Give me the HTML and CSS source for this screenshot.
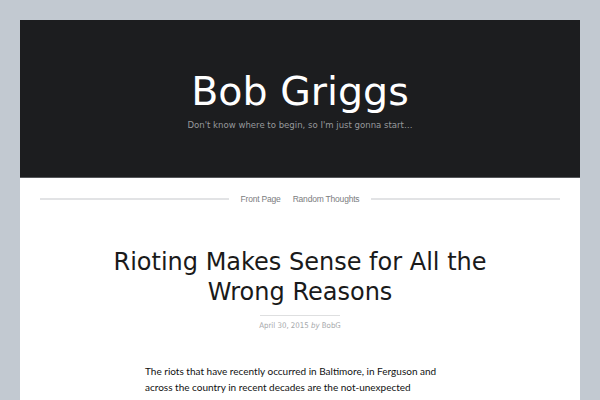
FILE: index.html
```html
<!DOCTYPE html>
<html>
<head>
<meta charset="utf-8">
<link rel="stylesheet" href="styles.css">
</head>
<body>
<div class="page">
  <header class="masthead">
    <h1 class="site-title">Bob Griggs</h1>
    <p class="tagline">Don't know where to begin, so I'm just gonna start…</p>
  </header>
  <nav class="nav">
    <span class="rule"></span>
    <ul class="menu">
      <li>Front Page</li>
      <li>Random Thoughts</li>
    </ul>
    <span class="rule"></span>
  </nav>
  <article class="post">
    <h2 class="post-title">Rioting Makes Sense for All the Wrong Reasons</h2>
    <div class="sep"></div>
    <div class="meta">April 30, 2015 <em>by</em> BobG</div>
    <div class="content">
      <p>The riots that have recently occurred in Baltimore, in Ferguson and across the country in recent decades are the not-unexpected</p>
    </div>
  </article>
</div>
</body>
</html>
```
FILE: styles.css
```css
html, body { margin: 0; padding: 0; }
body {
  background: #c2c9d1;
  padding: 20px 20px 0;
  font-family: "DejaVu Sans", sans-serif;
  overflow: hidden;
  height: 380px;
}
.page {
  background: #fff;
  height: 400px;
}
.masthead {
  background: #1c1d1f;
  border-bottom: 1px solid #55575a;
  text-align: center;
  padding-top: 48px;
  box-sizing: border-box;
  height: 158px;
}
.site-title {
  margin: 0;
  font-weight: normal;
  font-size: 39.5px;
  line-height: 46px;
  color: #fff;
}
.tagline {
  margin: 5px 0 0;
  font-size: 9.5px;
  font-stretch: condensed;
  color: #97999c;
}
.nav {
  display: flex;
  align-items: center;
  padding: 13px 20px 0;
  height: 16px;
}
.rule {
  flex: 1;
  height: 2px;
  background: #e2e3e5;
}
.menu {
  list-style: none;
  margin: 0;
  padding: 0 12px;
  display: flex;
  gap: 12px;
  font-family: "Liberation Sans", Arial, sans-serif;
  font-size: 8.5px;
  letter-spacing: -0.2px;
  color: #7b7d80;
}
.post {
  text-align: center;
  padding-top: 40px;
}
.post-title {
  margin: 0 auto;
  width: 420px;
  font-weight: normal;
  font-size: 24px;
  line-height: 30px;
  color: #1a1a1a;
}
.sep {
  width: 80px;
  height: 1px;
  margin: 8px auto 0;
  background: #dedfe0;
}
.meta {
  margin-top: 5px;
  font-size: 7.8px;
  font-stretch: condensed;
  color: #a6a8ab;
}
.meta em { font-style: italic; }
.content {
  width: 310px;
  margin: 33px auto 0;
  text-align: left;
  font-family: Lato, sans-serif;
  font-size: 10px;
  line-height: 16px;
  color: #111;
}
.content p { margin: 0; }
```
